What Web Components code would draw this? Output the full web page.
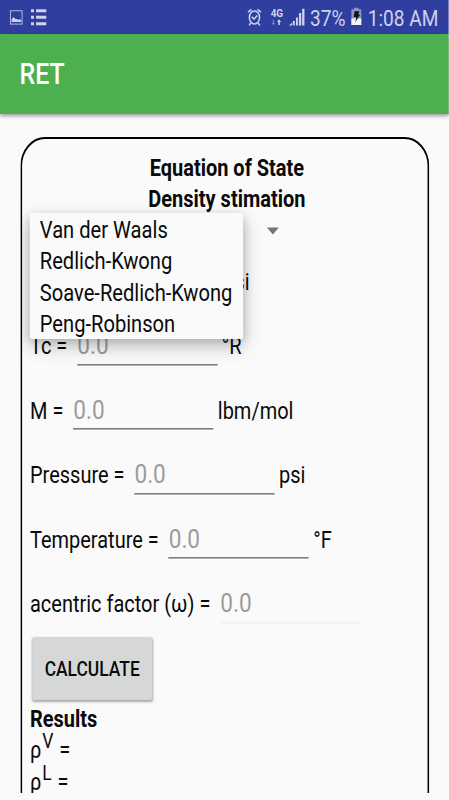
<!DOCTYPE html>
<html lang="en">
<head>
<meta charset="utf-8">
<title>RET</title>
<style>
html,body{margin:0;padding:0;height:100%;overflow:hidden;background:#fafafa}
</style>
</head>
<body>
<ret-app></ret-app>
<script>
const define = (name, html) => {
  const tpl = document.createElement('template');
  tpl.innerHTML = html.trim();
  customElements.define(name, class extends HTMLElement {
    constructor() {
      super();
      this.attachShadow({ mode: 'open' }).append(tpl.content.cloneNode(true));
    }
  });
};

define('status-bar', `
<style>
:host{display:flex;align-items:center;height:34px;box-sizing:border-box;background:#303f9f;color:#cdd1ec;font-size:22.5px;line-height:34px;white-space:pre}
svg{display:block;flex:none;height:34px}
.l{width:calc(var(--u)*60)}
.r{width:calc(var(--u)*66);margin-left:calc(var(--u)*184)}
.p{flex:none;width:calc(var(--u)*40);padding-top:1px}
.b{width:calc(var(--u)*12);margin-right:calc(var(--u)*5.7)}
.t{flex:none;padding-top:1px}
</style>
<svg class="l" viewBox="0 0 60 34" preserveAspectRatio="none">
  <rect x="10.5" y="10.7" width="11.6" height="13.4" fill="none" stroke="#a5acd8" stroke-width="1.1"/>
  <path d="M11.6 22V19.5L13.5 17L15 18.8L17 19L18.5 20L20 19L21.2 20.5V22Z" fill="#cdd1ec"/>
  <path d="M31 9.3h3v3h-3zM36 9.3h10.3v3H36zM31 15.8h3v3h-3zM36 15.8h10.3v3H36zM31 22.3h3v3h-3zM36 22.3h10.3v3H36z" fill="#cdd1ec"/>
</svg>
<svg class="r" viewBox="244 0 66 34" preserveAspectRatio="none">
  <g fill="none" stroke="#cdd1ec" stroke-width="1.5">
    <ellipse cx="254.5" cy="17.4" rx="5.1" ry="6.5"/>
    <path d="M248 12.2L251.5 9.4M257.5 9.4L261 12.2M250.7 23L249.2 25.4M258.3 23L259.8 25.4"/>
    <path d="M251.7 16.8L254 19.2L257.3 15.5"/>
  </g>
  <text transform="translate(270.7 16.8) scale(.92 1)" font-family="Roboto, sans-serif" font-weight="700" font-size="10.8" fill="#cdd1ec">4G</text>
  <path d="M274.1 20v3h1.1l-1.7 2.2l-1.7-2.2h1.1v-3z" fill="#7f88c4"/>
  <path d="M278.3 25v-3.1h-1.2l2-2.6l2 2.6h-1.2V25z" fill="#cdd1ec"/>
  <path d="M289 25.5L292 22.8V25.5zM292.8 21h2v4.5h-2zM296 17.5h2v8h-2zM299 13h2.3v12.5H299zM302.2 8.8h2.3v16.7h-2.3z" fill="#cdd1ec"/>
</svg>
<span class="p">37%</span>
<svg class="b" viewBox="350 0 12 34" preserveAspectRatio="none">
  <path d="M351.2 9.3h2.6V7.8h4.6v1.5h2.7V25h-9.9z" fill="#8d94cb"/>
  <path d="M351.2 18.5h9.9V25h-9.9z" fill="#f1f2fb"/>
  <path d="M354.5 11.2h4.8l-1.4 3.2h2.1l-4.9 7.9l1.1-5.3h-2.7z" fill="#111"/>
</svg>
<span class="t">1:08 AM</span>`);

define('app-bar', `
<style>
:host{display:flex;align-items:center;height:79.5px;box-sizing:border-box;padding:0 0 0 calc(var(--u)*19.5);background:#4caf50;color:#fff;font-size:29.3px;font-weight:500;box-shadow:0 2px 4px rgba(0,0,0,.38);position:relative}
</style><slot></slot>`);

define('value-field', `
<style>
:host{display:flex;align-items:baseline;height:64.4px;line-height:66px;white-space:pre}
.f{display:block;width:calc(var(--u)*140);height:64.4px;margin:0 calc(var(--u)*4.5) 0 calc(var(--u)*5);color:#9b9b9b;font-size:26.6px;background:linear-gradient(var(--line,#7d7d7d),var(--line,#7d7d7d)) 0 51.6px/100% 1.6px no-repeat}
</style><span><slot name="label"></slot> = </span><span class="f">0.0</span><slot></slot>`);

define('raised-button', `
<style>
:host{display:flex;align-items:center;justify-content:center;width:calc(var(--u)*120.5);height:63px;margin:3px 0 2.5px calc(var(--u)*2);border-radius:2.5px;background:#d6d8d7;font-size:20.5px;font-weight:500;box-shadow:0 1.5px 2.5px rgba(0,0,0,.32)}
</style><slot></slot>`);

define('text-line', `
<style>
:host{display:block;height:31.3px;line-height:33px;white-space:pre}
:host([heading]){font-weight:700}
:host([center]){text-align:center;padding-left:calc(var(--u)*3)}
</style><slot></slot>`);

define('rho-line', `
<style>
:host{display:block;height:31.3px;line-height:33.5px;white-space:pre}
sup{font-size:20.6px;line-height:0;vertical-align:10px;margin:0 1px}
</style>ρ<sup><slot></slot></sup> =`);

define('drop-down', `
<style>
:host{display:block;position:relative;height:33.8px}
svg{display:block;margin-left:calc(var(--u)*237);width:calc(var(--u)*12);height:33.8px}
.menu{position:absolute;z-index:2;left:0;top:-1px;width:calc(var(--u)*213);height:125.4px;box-sizing:border-box;padding:.8px 0 0 calc(var(--u)*9.8);font-size:23.7px;background:#fafafa;border-radius:2px;box-shadow:0 8px 20px rgba(0,0,0,.22),0 2px 10px rgba(0,0,0,.15)}
</style>
<svg viewBox="0 0 12 33.8" preserveAspectRatio="none"><path d="M0 13.4H12L6 20.6Z" fill="#757575"/></svg>
<div class="menu"><slot></slot></div>`);

define('outline-card', `
<style>
:host{display:block;height:656.5px;margin:23px 0 0 calc(var(--u)*20.3);width:calc(var(--u)*408.7);overflow:hidden}
.box{box-sizing:border-box;height:720px;border:2px solid #000;border-radius:29px;padding:13.2px calc(var(--u)*6.5) 0 calc(var(--u)*8)}
</style><div class="box"><slot></slot></div>`);

define('ret-app', `
<style>
/* Everything is laid out in a wider space and condensed horizontally by 0.85. */
:host{display:block;width:100%;height:800px;overflow:hidden;contain:paint}
.stage{--u:calc(1px/.85);width:calc(449px/.85);height:800px;overflow:hidden;transform:scaleX(.85);transform-origin:0 0;background:#fafafa;color:#0a0a0a;font-family:Roboto,sans-serif;font-size:23.5px}
.last{--line:#f0f0f0}
</style>
<div class="stage">
<status-bar></status-bar>
<app-bar>RET</app-bar>
<outline-card>
  <text-line heading center>Equation of State</text-line>
  <text-line heading center>Density stimation</text-line>
  <drop-down>
    <text-line>Van der Waals</text-line>
    <text-line>Redlich-Kwong</text-line>
    <text-line>Soave-Redlich-Kwong</text-line>
    <text-line>Peng-Robinson</text-line>
  </drop-down>
  <value-field><span slot="label">Pc</span>psi</value-field>
  <value-field><span slot="label">Tc</span>°R</value-field>
  <value-field><span slot="label">M</span>lbm/mol</value-field>
  <value-field><span slot="label">Pressure</span>psi</value-field>
  <value-field><span slot="label">Temperature</span>°F</value-field>
  <value-field class="last"><span slot="label">acentric factor (ω)</span></value-field>
  <raised-button>CALCULATE</raised-button>
  <text-line heading>Results</text-line>
  <rho-line>V</rho-line>
  <rho-line>L</rho-line>
</outline-card>
</div>`);
</script>
</body>
</html>
